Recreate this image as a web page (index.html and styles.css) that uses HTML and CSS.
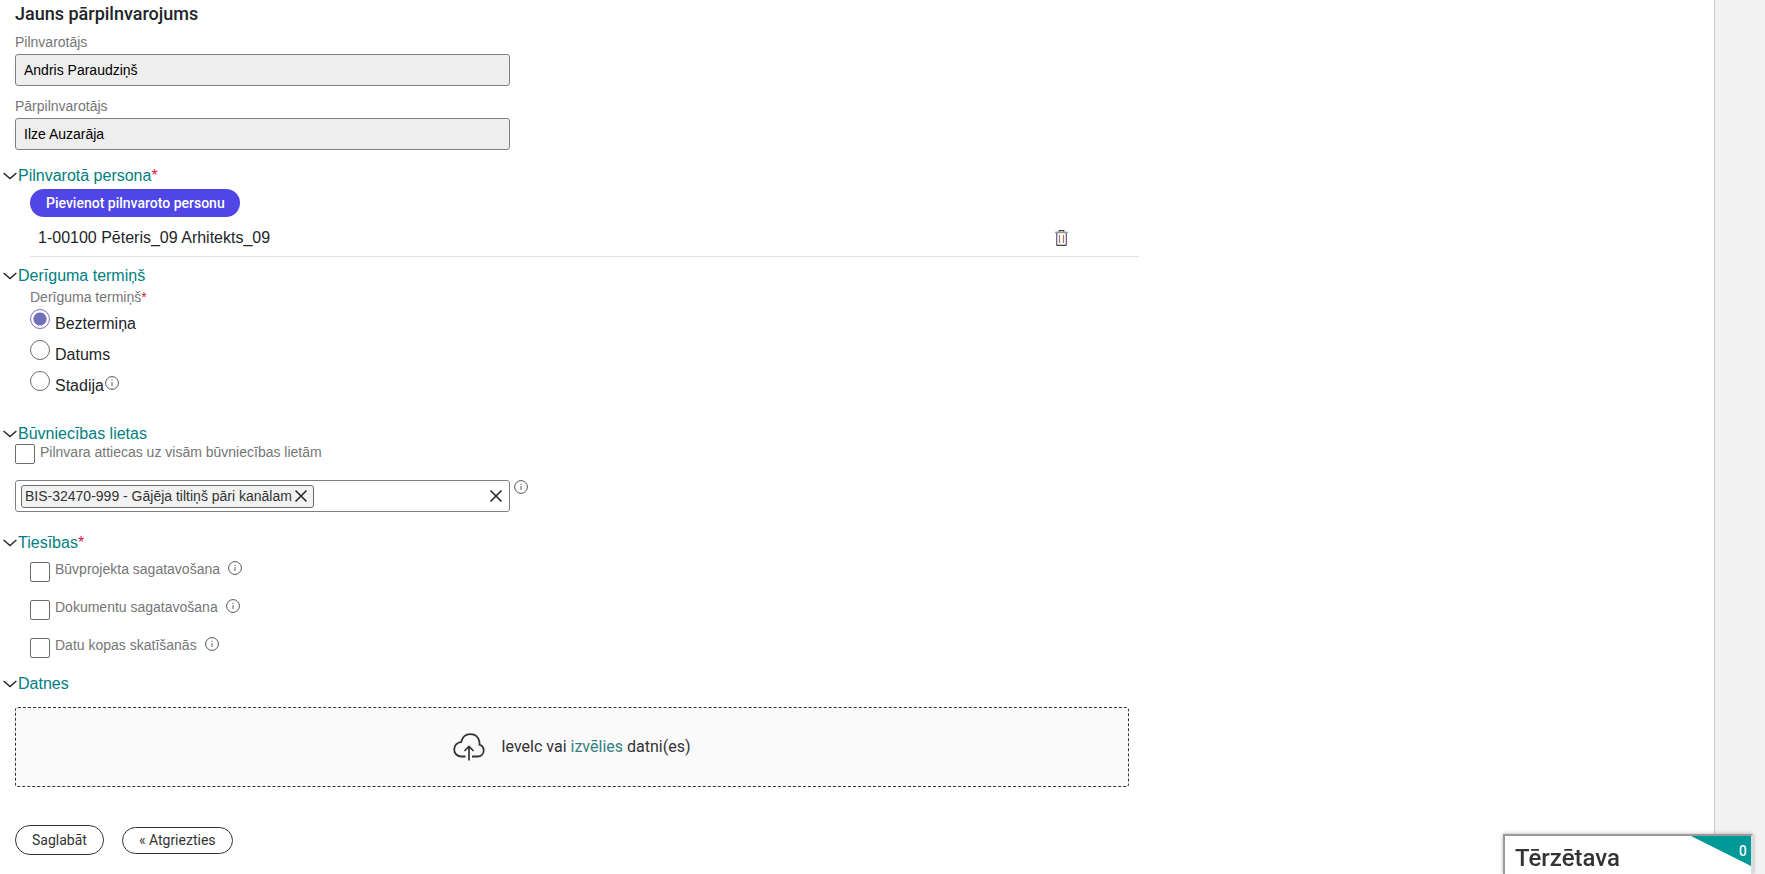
FILE: index.html
```html
<!DOCTYPE html>
<html lang="lv">
  <head>
    <meta charset="UTF-8" />
    <meta name="viewport" content="width=device-width, initial-scale=1.0" />
    <title>Jauns pārpilnvarojums</title>
    <link rel="stylesheet" href="styles.css">
  </head>
  <body>
    <svg class="sprite" aria-hidden="true">
      <symbol id="i-info" viewBox="0 0 14 14">
        <circle cx="7" cy="7" r="6.4" fill="none" stroke="#555" stroke-width="1" />
        <path d="M7 6v4M7 3.8v1.1" fill="none" stroke="#777" stroke-width="1.2" />
      </symbol>
      <symbol id="i-cross" viewBox="0 0 14 14">
        <path d="M1.5 1.5l11 11M12.5 1.5l-11 11" fill="none" stroke="currentColor" stroke-width="1.5" />
      </symbol>
      <symbol id="i-chevron" viewBox="0 0 14 8">
        <path d="M0.6 1L7 6.6 13.4 1" fill="none" stroke="#212529" stroke-width="1.4" />
      </symbol>
    </svg>

    <main class="page">
      <form class="form">
        <h1 class="title">Jauns pārpilnvarojums</h1>
        <div class="field">
          <label for="grantor">Pilnvarotājs</label>
          <input type="text" id="grantor" value="Andris Paraudziņš" readonly />
        </div>
        <div class="field">
          <label for="delegate">Pārpilnvarotājs</label>
          <input type="text" id="delegate" value="Ilze Auzarāja" readonly />
        </div>

        <details class="section persons" open>
          <summary><svg class="chevron"><use href="#i-chevron" /></svg>Pilnvarotā persona<span class="req">*</span></summary>
          <div class="indent">
            <button type="button" class="btn-add">Pievienot pilnvaroto personu</button>
            <div class="person">
              <span class="person-name">1-00100 Pēteris_09 Arhitekts_09</span>
              <button type="button" class="icon-btn" aria-label="Dzēst">
                <svg class="trash" viewBox="0 0 13 16">
                  <path d="M0 2.5h13" fill="none" stroke="#999" stroke-width="1.6" />
                  <path d="M4.2 1.8V0.6h4.6v1.2" fill="none" stroke="#444" stroke-width="1.2" />
                  <path d="M1.7 3v12.3M11.3 3v12.3" fill="none" stroke="#5d5a80" stroke-width="1.2" />
                  <path d="M4.5 5v8M8.5 5v8" fill="none" stroke="#b0765c" stroke-width="1.2" />
                  <path d="M1.5 15.3h10" fill="none" stroke="#333" stroke-width="1.2" />
                </svg>
              </button>
            </div>
          </div>
        </details>

        <details class="section term" open>
          <summary><svg class="chevron"><use href="#i-chevron" /></svg>Derīguma termiņš</summary>
          <div class="indent" role="radiogroup" aria-labelledby="term-label">
            <div class="label" id="term-label">Derīguma termiņš<span class="req">*</span></div>
            <div class="radio">
              <input type="radio" name="term" id="term-none" checked />
              <label for="term-none">Beztermiņa</label>
            </div>
            <div class="radio">
              <input type="radio" name="term" id="term-date" />
              <label for="term-date">Datums</label>
            </div>
            <div class="radio">
              <input type="radio" name="term" id="term-stage" />
              <label for="term-stage">Stadija</label>
              <svg class="info"><use href="#i-info" /></svg>
            </div>
          </div>
        </details>

        <details class="section cases" open>
          <summary><svg class="chevron"><use href="#i-chevron" /></svg>Būvniecības lietas</summary>
          <div class="body">
            <div class="check">
              <input type="checkbox" id="all-cases" />
              <label for="all-cases">Pilnvara attiecas uz visām būvniecības lietām</label>
            </div>
            <div class="case-row">
              <div class="multi">
                <span class="tag">BIS-32470-999 - Gājēja tiltiņš pāri kanālam<button type="button" class="icon-btn" aria-label="Noņemt"><svg class="cross"><use href="#i-cross" /></svg></button></span>
                <input type="text" class="multi-input" aria-label="Būvniecības lietas" />
                <button type="button" class="icon-btn" aria-label="Notīrīt"><svg class="cross"><use href="#i-cross" /></svg></button>
              </div>
              <svg class="info"><use href="#i-info" /></svg>
            </div>
          </div>
        </details>

        <details class="section rights" open>
          <summary><svg class="chevron"><use href="#i-chevron" /></svg>Tiesības<span class="req">*</span></summary>
          <div class="indent rights-list">
            <div class="check">
              <input type="checkbox" id="right-project" />
              <label for="right-project">Būvprojekta sagatavošana</label>
              <svg class="info"><use href="#i-info" /></svg>
            </div>
            <div class="check">
              <input type="checkbox" id="right-docs" />
              <label for="right-docs">Dokumentu sagatavošana</label>
              <svg class="info"><use href="#i-info" /></svg>
            </div>
            <div class="check">
              <input type="checkbox" id="right-data" />
              <label for="right-data">Datu kopas skatīšanās</label>
              <svg class="info"><use href="#i-info" /></svg>
            </div>
          </div>
        </details>

        <details class="section files" open>
          <summary><svg class="chevron"><use href="#i-chevron" /></svg>Datnes</summary>
          <div class="dropzone">
            <svg class="cloud" viewBox="0 0 32 28">
              <path d="M12.5 23.5H8.5C4.3 23.5 1.2 20.5 1.2 16.4c0-4 2.9-7 6.9-7.2C9.3 4.5 12.8 1.2 17.2 1.2c5 0 8.500 3.200 9.300 8 .1 1 .1 1.600 0 2.400 2.500.8 4.200 3 4.200 5.700 0 3.600-2.600 6.200-6.200 6.200h-5.500" fill="none" stroke="#333" stroke-width="1.8" />
              <path d="M16 27.500V14M11.500 18l4.500-4.500 4.500 4.500" fill="none" stroke="#333" stroke-width="1.7" />
            </svg>
            <span>Ievelc vai <a href="#">izvēlies</a> datni(es)</span>
          </div>
        </details>

        <div class="actions">
          <button type="submit" class="btn">Saglabāt</button>
          <a href="#" class="btn btn-back">« Atgriezties</a>
        </div>
      </form>
    </main>

    <aside class="chat">
      <h2>Tērzētava</h2>
      <svg class="chat-corner" viewBox="0 0 60 30"><path d="M0 0h60v30z" fill="#009999" /></svg>
      <span class="chat-count">0</span>
    </aside>
  </body>
</html>
```
FILE: styles.css
```css
* {
  box-sizing: border-box;
}
body {
  margin: 0;
  background: #f2f2f2;
  color: #212529;
  font: 16px/20px "Liberation Sans", Arial, sans-serif;
  overflow: hidden;
}
.sprite {
  display: none;
}
svg {
  display: block;
  flex: none;
}
.page {
  min-height: 100vh;
  margin-right: 50px;
  background: #fff;
  border-right: 1px solid #ccc;
}
.form {
  width: 66.67%;
  padding: 4px 14px 0 15px;
}
.title {
  margin: 0 0 10px;
  font: 500 18px/20px Roboto, sans-serif;
}
.field {
  width: 495px;
  margin-bottom: 12px;
}
.field label,
.label,
.check label {
  display: block;
  color: #767676;
  font-size: 14px;
  line-height: 16px;
}
.field input {
  display: block;
  width: 100%;
  height: 32px;
  margin: 4px 0 0;
  padding: 0 8px;
  border: 1px solid #808080;
  border-radius: 3px;
  background: #eee;
  color: #000;
  font: inherit;
  font-size: 14px;
}
.section summary {
  display: flex;
  align-items: center;
  margin-left: -12px;
  color: #008080;
  cursor: pointer;
  list-style: none;
}
.chevron {
  width: 14px;
  height: 8px;
  margin-right: 1px;
}
.req {
  color: #dc143c;
}
.indent {
  padding-left: 15px;
}
.persons {
  margin-top: 16px;
}
.btn-add {
  height: 28px;
  margin-top: 3px;
  padding: 0 15px 0 16px;
  border: 0;
  border-radius: 14px;
  background: #5046e5;
  color: #fff;
  font: 500 14px/20px Roboto, sans-serif;
}
.person {
  display: flex;
  align-items: center;
  justify-content: space-between;
  height: 40px;
  margin-right: -10px;
  padding: 3px 71px 0 8px;
  border-bottom: 1px solid #e2e2e2;
}
.icon-btn {
  padding: 0;
  border: 0;
  background: none;
  color: #222;
}
.trash {
  width: 13px;
  height: 16px;
}
.term {
  margin-top: 9px;
}
.label {
  margin: 3px 0 4px;
}
.radio,
.check {
  display: flex;
  align-items: flex-start;
}
.radio {
  height: 31px;
}
.radio label {
  padding-top: 5px;
}
.radio input,
.check input {
  appearance: none;
  width: 20px;
  height: 20px;
  margin: 0 5px 0 0;
  border: 1px solid #6c6c6c;
  background: #fff;
}
.radio input {
  border-radius: 50%;
}
.radio input:checked {
  border-color: #716fb9;
  background: radial-gradient(circle, #716fb9 6px, transparent 7px);
}
.check input {
  border-radius: 2px;
}
.info {
  width: 14px;
  height: 14px;
}
.radio .info {
  margin: 5px 0 0 1px;
}
.cases {
  margin-top: 22px;
}
.case-row {
  display: flex;
  gap: 4px;
  margin-top: 16px;
}
.multi {
  display: flex;
  align-items: center;
  width: 495px;
  height: 32px;
  padding: 0 6px 0 5px;
  border: 1px solid #808080;
  border-radius: 3px;
}
.tag {
  display: flex;
  align-items: center;
  gap: 2px;
  height: 23px;
  padding: 0 5px 0 3px;
  border: 1px solid #6c6c6c;
  border-radius: 3px;
  background: #f2f2f2;
  color: #333;
  font-size: 14px;
}
.multi-input {
  flex: 1;
  min-width: 0;
  border: 0;
  outline: 0;
  background: none;
}
.cross {
  width: 14px;
  height: 14px;
}
.rights {
  margin-top: 21px;
}
.rights-list {
  display: grid;
  gap: 17px;
  padding-top: 8px;
}
.rights input {
  margin-top: 1px;
}
.rights .info {
  margin-left: 8px;
}
.files {
  margin-top: 16px;
}
.dropzone {
  display: flex;
  align-items: center;
  justify-content: center;
  gap: 16px;
  height: 80px;
  margin-top: 13px;
  border: 1px dashed #333;
  border-radius: 3px;
  background: #fafafa;
  color: #333;
  font-family: Roboto, sans-serif;
}
.dropzone a {
  color: #377f7f;
  text-decoration: none;
}
.cloud {
  width: 32px;
  height: 28px;
}
.actions {
  display: flex;
  align-items: center;
  gap: 18px;
  margin-top: 38px;
}
.btn {
  height: 30px;
  padding: 0 16px;
  border: 1px solid #333;
  border-radius: 15px;
  background: #fff;
  color: #333;
  font: 14px/28px Roboto, sans-serif;
  text-decoration: none;
}
.btn-back {
  height: 27px;
  line-height: 25px;
}
/* chat tab pinned to the bottom of the window */
.chat {
  position: fixed;
  right: 12px;
  bottom: 0;
  width: 250px;
  height: 40px;
  border: 2px solid #999;
  border-right-color: #ddd;
  border-bottom: 0;
  background: #fff;
  box-shadow: 0 0 4px rgba(0, 0, 0, 0.3);
}
.chat h2 {
  margin: 0;
  padding: 8px 10px;
  color: #333;
  font: 500 24px/28px Roboto, sans-serif;
}
.chat-corner {
  position: absolute;
  top: 0;
  right: 0;
  width: 60px;
  height: 30px;
}
.chat-count {
  position: absolute;
  top: 5px;
  right: 4px;
  color: #fff;
  font: 500 14px/20px Roboto, sans-serif;
}
```
